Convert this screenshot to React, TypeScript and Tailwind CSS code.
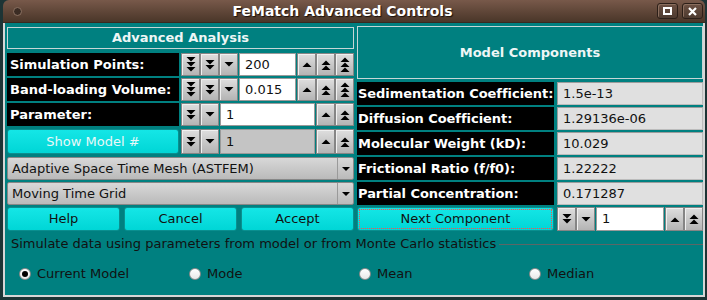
import React from "react";

const values = [
  { label: "Sedimentation Coefficient:", value: "1.5e-13" },
  { label: "Diffusion Coefficient:", value: "1.29136e-06" },
  { label: "Molecular Weight (kD):", value: "10.029" },
  { label: "Frictional Ratio (f/f0):", value: "1.22222" },
  { label: "Partial Concentration:", value: "0.171287" },
];

const radios = [
  { label: "Current Model", checked: true },
  { label: "Mode", checked: false },
  { label: "Mean", checked: false },
  { label: "Median", checked: false },
];

// stacked triangles for the counter buttons
function Tri({ n, up }: { n: number; up?: boolean }) {
  const h = n * 5;
  return (
    <svg width="10" height={h} viewBox={`0 0 10 ${h}`}>
      {Array.from({ length: n }).map((_, i) => {
        const y = i * 5;
        const pts = up
          ? `0.5,${y + 5} 9.5,${y + 5} 5,${y + 0.5}`
          : `0.5,${y} 9.5,${y} 5,${y + 4.5}`;
        return <polygon key={i} points={pts} fill="#000" />;
      })}
    </svg>
  );
}

const CBtn = ({ n, up }: { n: number; up?: boolean }) => (
  <div className="w-[19px] h-full shrink-0 flex items-center justify-center border border-[#858585] bg-gradient-to-b from-[#dedede] to-[#b4b4b4] shadow-[inset_1px_1px_0_#f0f0f0]">
    <Tri n={n} up={up} />
  </div>
);

function Counter({ levels, value, disabled }: { levels: number; value: string; disabled?: boolean }) {
  const downs = Array.from({ length: levels }, (_, i) => levels - i);
  const ups = Array.from({ length: levels }, (_, i) => i + 1);
  return (
    <div className="flex-1 flex h-full">
      {downs.map((n) => (
        <CBtn key={"d" + n} n={n} />
      ))}
      <div
        className={`flex-1 mx-[1px] flex items-center pl-[5px] text-[13px] text-[#111] border border-[#9a9a9a] ${
          disabled ? "bg-[#c4c4c4]" : "bg-white"
        }`}
      >
        {value}
      </div>
      {ups.map((n) => (
        <CBtn key={"u" + n} n={n} up />
      ))}
    </div>
  );
}

const Combo = ({ text }: { text: string }) => (
  <div className="h-[23px] flex items-center border border-[#878787] rounded-[2px] bg-gradient-to-b from-[#d8d8d8] to-[#bababa] text-[13px] text-[#111]">
    <span className="flex-1 pl-[4px]">{text}</span>
    <div className="w-[16px] h-full border-l border-[#9a9a9a] flex items-center justify-center">
      <svg width="8" height="4" viewBox="0 0 8 4">
        <polygon points="0,0 8,0 4,4" fill="#000" />
      </svg>
    </div>
  </div>
);

const CyanBtn = ({ children, className = "" }: { children: React.ReactNode; className?: string }) => (
  <div
    className={`flex items-center justify-center rounded-[3px] border border-[#0a8f8f] bg-gradient-to-b from-[#14e6e6] to-[#00d6d6] text-[13px] ${className}`}
  >
    {children}
  </div>
);

const Radio = ({ checked }: { checked: boolean }) => (
  <div className="w-[12px] h-[12px] rounded-full border border-[#8a8a8a] bg-gradient-to-b from-[#ffffff] to-[#e8e8e8] flex items-center justify-center">
    {checked && <div className="w-[6px] h-[6px] rounded-full bg-black" />}
  </div>
);

export default function App() {
  return (
    <div className="w-[707px] h-[300px] overflow-hidden bg-[#1d3435] font-['DejaVu_Sans',sans-serif]">
      <div className="ml-[3px] w-[702px] h-[297px] flex flex-col">
        {/* TITLE BAR */}
        <div className="h-[23px] shrink-0 flex items-center rounded-t-[6px] bg-gradient-to-b from-[#78594a] to-[#4a3629] border-b border-[#3a2a20]">
          <div className="w-[25px] pl-[10px] flex items-center">
            <div className="w-[9px] h-[9px] rounded-full bg-[#3b2c24] border border-[#8c7262]" />
          </div>
          <div className="flex-1 text-center text-white font-bold text-[14px] [text-shadow:1px_1px_1px_#1a100a]">
            FeMatch Advanced Controls
          </div>
          <div className="flex items-center gap-[4px] pr-[2px]">
            <div className="w-[21px] h-[16px] rounded-[3px] border border-[#2c1f18] bg-gradient-to-b from-[#6c5143] to-[#4d3a2f] shadow-[inset_1px_1px_0_#8a6e5e] flex items-center justify-center">
              <div className="w-[9px] h-[8px] border-2 border-white" />
            </div>
            <div className="w-[21px] h-[16px] rounded-[3px] border border-[#2c1f18] bg-gradient-to-b from-[#6c5143] to-[#4d3a2f] shadow-[inset_1px_1px_0_#8a6e5e] flex items-center justify-center">
              <svg width="9" height="9" viewBox="0 0 9 9">
                <path d="M1 1 L8 8 M8 1 L1 8" stroke="#fff" strokeWidth="2.2" />
              </svg>
            </div>
          </div>
        </div>

        {/* BODY */}
        <div className="flex-1 bg-[#008080] border-x-2 border-b-2 border-[#d6d6d6] pl-[2px] pt-[3px] flex flex-col">
          <div className="flex gap-[3px]">
            {/* LEFT */}
            <div className="w-[347px] flex flex-col">
              <div className="mt-[1px] h-[22px] border border-[#c6d6d6] flex items-center justify-center text-[13px] font-bold text-[#eef6f6]">
                Advanced Analysis
              </div>
              <div className="mt-[4px] flex flex-col gap-[2px]">
                <div className="flex h-[23px] gap-[2px]">
                  <div className="w-[172px] bg-black text-white font-bold text-[13px] pl-[3px] flex items-center whitespace-nowrap">Simulation Points:</div>
                  <Counter levels={3} value="200" />
                </div>
                <div className="flex h-[23px] gap-[2px]">
                  <div className="w-[172px] bg-black text-white font-bold text-[13px] pl-[3px] flex items-center whitespace-nowrap">Band-loading Volume:</div>
                  <Counter levels={3} value="0.015" />
                </div>
                <div className="flex h-[23px] gap-[2px]">
                  <div className="w-[172px] bg-black text-white font-bold text-[13px] pl-[3px] flex items-center whitespace-nowrap">Parameter:</div>
                  <Counter levels={2} value="1" />
                </div>
                <div className="flex h-[27px] gap-[2px] items-center">
                  <CyanBtn className="w-[172px] h-[25px] text-[#eaf8f8]">Show Model #</CyanBtn>
                  <div className="flex-1 h-[25px] flex">
                    <Counter levels={2} value="1" disabled />
                  </div>
                </div>
                <Combo text="Adaptive Space Time Mesh (ASTFEM)" />
                <Combo text="Moving Time Grid" />
                <div className="flex h-[24px] gap-[4px]">
                  <CyanBtn className="flex-1 text-[#111]">Help</CyanBtn>
                  <CyanBtn className="flex-1 text-[#111]">Cancel</CyanBtn>
                  <CyanBtn className="flex-1 text-[#111]">Accept</CyanBtn>
                </div>
              </div>
            </div>

            {/* RIGHT */}
            <div className="w-[346px] flex flex-col">
              <div className="h-[53px] border border-[#c6d6d6] flex items-center justify-center text-[13px] font-bold text-[#eef6f6]">
                Model Components
              </div>
              <div className="mt-[3px] flex flex-col gap-[2px]">
                {values.map((v) => (
                  <div key={v.label} className="flex h-[23px] gap-[3px]">
                    <div className="w-[197px] bg-black text-white font-bold text-[13px] pl-[1px] flex items-center whitespace-nowrap overflow-hidden tracking-[-0.05px]">
                      {v.label}
                    </div>
                    <div className="flex-1 bg-[#e0e0e0] border border-t-[#9c9c9c] border-l-[#9c9c9c] border-b-[#bcbcbc] border-r-[#bcbcbc] pl-[5px] flex items-center text-[13px] text-[#111]">
                      {v.value}
                    </div>
                  </div>
                ))}
                <div className="flex h-[24px] gap-[3px]">
                  <CyanBtn className="w-[197px] p-[1px] text-[#111]">
                    <div className="w-full h-full border border-dotted border-[#ff4a4a] flex items-center justify-center">
                      Next Component
                    </div>
                  </CyanBtn>
                  <Counter levels={2} value="1" />
                </div>
              </div>
            </div>
          </div>

          {/* GROUP BOX TITLE */}
          <div className="mt-[5px] h-[16px] flex items-center">
            <span className="pl-[4px] text-[13px] text-[#111]">
              Simulate data using parameters from model or from Monte Carlo statistics
            </span>
            <div className="flex-1 ml-[3px] h-px bg-[#5c6666]" />
          </div>

          {/* RADIOS */}
          <div className="mt-[10px] h-[23px] pl-[12px] flex items-center">
            {radios.map((r) => (
              <div key={r.label} className="w-[170px] flex items-center gap-[6px] text-[13px] text-[#111]">
                <Radio checked={r.checked} />
                <span>{r.label}</span>
              </div>
            ))}
          </div>
        </div>
      </div>
    </div>
  );
}
